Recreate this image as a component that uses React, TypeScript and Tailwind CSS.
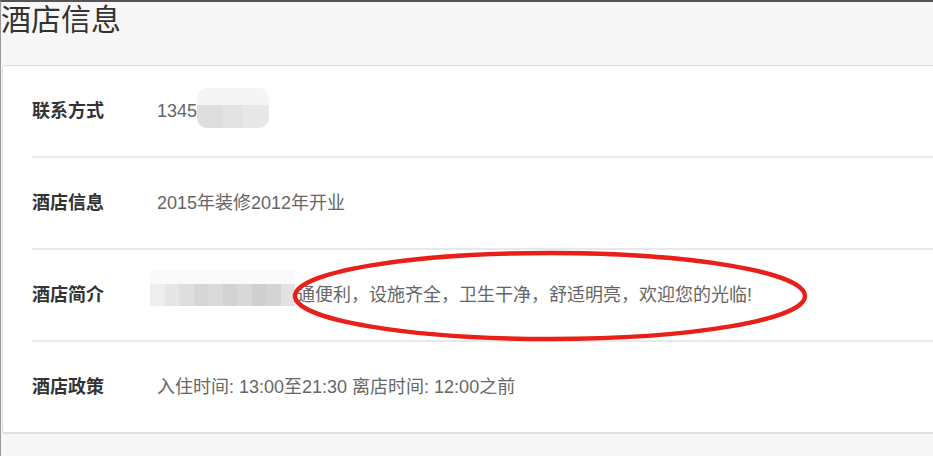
import React from "react";

const font = { fontFamily: '"Liberation Sans", "Noto Sans CJK SC", sans-serif' };

// 打码色块（模拟截图里的马赛克）
const mosaic = ["#eeeeee", "#e6e6e6", "#dedede", "#d6d6d6", "#dadada", "#d2d2d2", "#d8d8d8", "#cfcfcf", "#d4d4d4", "#e2e2e2"];

function Row({ label, children, last }: { label: string; children: React.ReactNode; last?: boolean }) {
  return (
    <div className={`relative flex items-center ${last ? "h-[90px]" : "h-[92px] border-b-2 border-[#e8e8e8]"}`}>
      <div className="w-[125px] shrink-0 text-[18px] font-bold text-[#333]">{label}</div>
      <div className="flex items-center text-[18px] text-[#666] whitespace-nowrap">{children}</div>
    </div>
  );
}

export default function App() {
  return (
    <div
      className="w-[933px] h-[456px] overflow-hidden bg-[#f7f7f7] border-t-2 border-t-[#555] border-l border-l-[#9a9a9a]"
      style={font}
    >
      <h1 className="h-[36px] leading-[36px] text-[30px] font-normal text-[#333] mb-[27px]">酒店信息</h1>

      <div className="ml-[1px] w-[980px] bg-white border border-[#dcdcdc] border-b-2 border-b-[#e0e0e0] rounded-[3px] pl-[29px]">
        <Row label="联系方式">
          <span>1345</span>
          <span className="inline-flex flex-col w-[72px] h-[40px] -mt-[6px] rounded-[10px] overflow-hidden blur-[0.5px]">
            <span className="h-[17px] bg-[#f5f5f5]" />
            <span className="flex-1 flex">
              <span className="w-[26px] bg-[#dedede]" />
              <span className="w-[20px] bg-[#e3e3e3]" />
              <span className="w-[26px] bg-[#e8e8e8]" />
            </span>
          </span>
        </Row>

        <Row label="酒店信息">
          <span>2015年装修2012年开业</span>
        </Row>

        <Row label="酒店简介">
          <span className="-ml-[7px] mr-[2px] flex flex-col">
            <span className="h-[14px] w-[145px] bg-[#fafafa]" />
            <span className="flex h-[22px] blur-[0.5px]">
              {mosaic.map((c, i) => (
                <span key={i} className="w-[14.5px] h-full" style={{ background: c }} />
              ))}
            </span>
            <span className="h-[14px]" />
          </span>
          <span>通便利，设施齐全，卫生干净，舒适明亮，欢迎您的光临!</span>
          <svg
            className="absolute left-[259px] top-0 pointer-events-none"
            width="522"
            height="92"
            viewBox="0 0 522 92"
          >
            <ellipse cx="259" cy="46" rx="255" ry="43" fill="none" stroke="#e8201a" strokeWidth="4.5" />
          </svg>
        </Row>

        <Row label="酒店政策" last>
          <span>入住时间: 13:00至21:30 离店时间: 12:00之前</span>
        </Row>
      </div>
    </div>
  );
}
